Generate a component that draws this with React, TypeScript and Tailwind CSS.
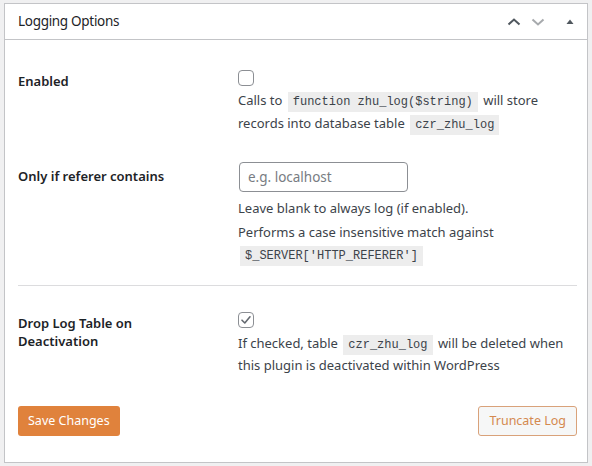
import React from "react";

const font = { fontFamily: '"Noto Sans", "Liberation Sans", sans-serif' };

function Code({ children }: { children: React.ReactNode }) {
  return (
    <code className="bg-[#ededed] px-[5px] py-[3px] mx-[2px] text-[12px] leading-none text-[#3c434a] [font-family:'Liberation_Mono',monospace]">
      {children}
    </code>
  );
}

function Checkbox({ checked }: { checked?: boolean }) {
  return (
    <div className="w-[16px] h-[16px] border border-[#8c8f94] rounded-[4px] bg-white flex items-center justify-center">
      {checked && (
        <svg width="14" height="14" viewBox="0 0 14 14">
          <path d="M3 7.2 L5.8 10 L11 3.8" fill="none" stroke="#646970" strokeWidth="1.6" strokeLinecap="round" strokeLinejoin="round" />
        </svg>
      )}
    </div>
  );
}

export default function App() {
  return (
    <div className="w-[592px] h-[466px] bg-[#f0f0f1] pt-[3px] px-[4px]" style={font}>
      <div className="h-[460px] bg-white border border-[#c3c4c7] flex flex-col text-[#1d2327]">
        <div className="h-[36px] shrink-0 border-b border-[#c3c4c7] flex items-center pl-[13px] pr-[5px]">
          <div className="text-[13.5px] font-normal tracking-[-0.3px] flex-1">Logging Options</div>
          <div className="flex items-center">
            <svg width="14" height="10" viewBox="0 0 14 10">
              <path d="M1.5 7.5 L7 2.5 L12.5 7.5" fill="none" stroke="#50575e" strokeWidth="2" />
            </svg>
            <svg width="14" height="10" viewBox="0 0 14 10" className="ml-[10px]">
              <path d="M1.5 2.5 L7 7.5 L12.5 2.5" fill="none" stroke="#a7aaad" strokeWidth="2" />
            </svg>
            <svg width="24" height="10" viewBox="0 0 24 10" className="ml-[13px]">
              <path d="M8.5 7 L12 2.5 L15.5 7 Z" fill="#50575e" />
            </svg>
          </div>
        </div>
        <div className="pl-[13px] pr-[10px] pt-[30px] flex flex-col">
          <div className="flex">
            <div className="w-[220px] shrink-0 text-[13px] font-semibold leading-[20px] pt-[1px]">Enabled</div>
            <div className="flex-1">
              <Checkbox />
              <p className="mt-[3px] text-[13px] leading-[23px] text-[#3c434a]">
                Calls to <Code>function zhu_log($string)</Code> will store records into database table <Code>czr_zhu_log</Code>
              </p>
            </div>
          </div>

          <div className="flex mt-[27px]">
            <div className="w-[220px] shrink-0 text-[13px] font-semibold leading-[20px] pt-[4px]">Only if referer contains</div>
            <div className="flex-1">
              <div className="ml-[1px] w-[169px] h-[30px] border border-[#8c8f94] rounded-[4px] px-[8px] flex items-center text-[13.5px] text-[#787c82]">
                e.g. localhost
              </div>
              <p className="mt-[5px] text-[13px] leading-[22px] text-[#3c434a]">Leave blank to always log (if enabled).</p>
              <p className="mt-[2px] text-[13px] leading-[22px] text-[#3c434a]">
                Performs a case insensitive match against<br />
                <Code>$_SERVER['HTTP_REFERER']</Code>
              </p>
            </div>
          </div>

          <div className="mt-[20px] border-t border-[#dcdcde]" />

          <div className="flex mt-[26px]">
            <div className="w-[220px] shrink-0 pr-[40px] text-[13px] font-semibold leading-[18px] pt-[2px]">Drop Log Table on Deactivation</div>
            <div className="flex-1">
              <Checkbox checked />
              <p className="mt-[4px] text-[13px] leading-[22px] text-[#3c434a]">
                If checked, table <Code>czr_zhu_log</Code> will be deleted when this plugin is deactivated within WordPress
              </p>
            </div>
          </div>

          <div className="flex justify-between mt-[30px]">
            <button className="h-[30px] px-[10px] rounded-[3px] bg-[#e0823c] text-white text-[12.5px]">Save Changes</button>
            <button className="h-[30px] px-[10px] rounded-[3px] bg-[#f6f7f7] border border-[#d9a27a] text-[#d4894f] text-[12.5px]">Truncate Log</button>
          </div>
        </div>
      </div>
    </div>
  );
}
